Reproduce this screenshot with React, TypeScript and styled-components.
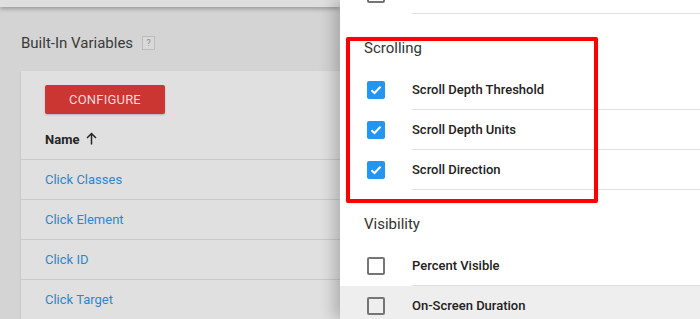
import React from 'react';
import styled, { createGlobalStyle } from 'styled-components';

const GlobalStyle = createGlobalStyle`
  html, body {
    margin: 0;
    padding: 0;
    background: #d4d4d4;
  }
  body {
    font-family: Roboto, "Liberation Sans", Arial, sans-serif;
  }
`;

const Screen = styled.div`
  display: flex;
  width: 700px;
  height: 319px;
  overflow: hidden;
`;

const Page = styled.div`
  width: 340px;
  flex-shrink: 0;
  background: #d4d4d4;
  display: flex;
  flex-direction: column;
`;

const TopBar = styled.div`
  height: 7px;
  background: #dfdfdf;
  box-shadow: 0 2px 4px rgba(0, 0, 0, 0.28);
`;

const Title = styled.div`
  display: flex;
  align-items: center;
  gap: 9px;
  margin: 21px 0 13px 21px;
  height: 30px;
  font-size: 15px;
  color: #3a3a3a;
`;

const Help = styled.span`
  width: 11px;
  height: 12px;
  border: 1px solid #bcbcbc;
  background: #d9d9d9;
  color: #8a8a8a;
  font-size: 9px;
  line-height: 12px;
  text-align: center;
`;

const Card = styled.div`
  margin-left: 21px;
  background: #e0e0e0;
  box-shadow: 0 1px 2px rgba(0, 0, 0, 0.15);
  padding-top: 14px;
  flex: 1;
`;

const ConfigureButton = styled.button`
  margin-left: 24px;
  width: 120px;
  height: 29px;
  border: none;
  border-radius: 2px;
  background: #cb3633;
  color: #f4dada;
  font-family: inherit;
  font-size: 13px;
  letter-spacing: 0.2px;
  box-shadow: 0 1px 2px rgba(0, 0, 0, 0.2);
  margin-bottom: 5px;
`;

const TableRow = styled.div<{ $header?: boolean }>`
  box-sizing: border-box;
  height: 40px;
  display: flex;
  align-items: center;
  padding-left: 24px;
  border-top: ${p => (p.$header ? 'none' : '1px solid #c9c9c9')};
  font-size: 13px;
  font-weight: ${p => (p.$header ? 700 : 400)};
  color: ${p => (p.$header ? '#262626' : '#2f86cf')};
`;

const SortArrow = styled.svg`
  margin-left: 7px;
  margin-top: -1px;
`;

const Panel = styled.div`
  position: relative;
  z-index: 1;
  flex: 1;
  background: #ffffff;
  box-shadow: -6px 0 14px rgba(0, 0, 0, 0.22);
`;

const PanelBody = styled.div`
  margin-top: -26px;
`;

const Row = styled.div<{ $hover?: boolean }>`
  display: flex;
  height: 40px;
  background: ${p => (p.$hover ? '#eeeeee' : 'transparent')};
`;

const BoxCell = styled.div`
  width: 72px;
  flex-shrink: 0;
  display: flex;
  align-items: center;
  padding-left: 27px;
  box-sizing: border-box;
`;

const Label = styled.div`
  flex: 1;
  display: flex;
  align-items: center;
  border-bottom: 1px solid #e0e0e0;
  font-size: 13px;
  font-weight: 500;
  color: #212121;
`;

const Box = styled.div<{ $checked?: boolean }>`
  box-sizing: border-box;
  width: 18px;
  height: 18px;
  border-radius: 2px;
  display: flex;
  align-items: center;
  justify-content: center;
  background: ${p => (p.$checked ? '#2196f3' : 'transparent')};
  border: ${p => (p.$checked ? 'none' : '2px solid #757575')};
`;

const Heading = styled.div`
  height: 56px;
  box-sizing: border-box;
  padding: 21px 0 0 24px;
  line-height: 26px;
  font-size: 15px;
  color: #333333;
`;

const Highlight = styled.div`
  position: absolute;
  left: 6px;
  top: 37px;
  width: 252px;
  height: 166px;
  box-sizing: border-box;
  border: 4px solid #ff0000;
  border-radius: 2px;
  box-shadow: 0 0 1px rgba(0, 0, 0, 0.3);
  pointer-events: none;
`;

const Check = () => (
  <svg width="12" height="10" viewBox="0 0 12 10">
    <path d="M1.5 5.2 L4.5 8 L10.5 1.8" fill="none" stroke="#fff" strokeWidth="2" />
  </svg>
);

interface Item {
  name: string;
  checked: boolean;
  hover?: boolean;
}

const VarRow: React.FC<{ item: Item }> = ({ item }) => (
  <Row $hover={item.hover}>
    <BoxCell>
      <Box $checked={item.checked}>{item.checked && <Check />}</Box>
    </BoxCell>
    <Label>{item.name}</Label>
  </Row>
);

const scrolling: Item[] = [
  { name: 'Scroll Depth Threshold', checked: true },
  { name: 'Scroll Depth Units', checked: true },
  { name: 'Scroll Direction', checked: true },
];

const visibility: Item[] = [
  { name: 'Percent Visible', checked: false },
  { name: 'On-Screen Duration', checked: false, hover: true },
];

const links = ['Click Classes', 'Click Element', 'Click ID', 'Click Target'];

export default function App() {
  return (
    <>
      <GlobalStyle />
      <Screen>
        <Page>
          <TopBar />
          <Title>
            Built-In Variables <Help>?</Help>
          </Title>
          <Card>
            <ConfigureButton>CONFIGURE</ConfigureButton>
            <TableRow $header>
              Name
              <SortArrow width="11" height="13" viewBox="0 0 11 13">
                <path d="M5.5 12.5 V1.5 M1 6 L5.5 1.5 L10 6" fill="none" stroke="#262626" strokeWidth="1.5" />
              </SortArrow>
            </TableRow>
            {links.map(l => (
              <TableRow key={l}>{l}</TableRow>
            ))}
          </Card>
        </Page>
        <Panel>
          <PanelBody>
            <VarRow item={{ name: '', checked: false }} />
            <Heading>Scrolling</Heading>
            {scrolling.map(i => (
              <VarRow key={i.name} item={i} />
            ))}
            <Heading>Visibility</Heading>
            {visibility.map(i => (
              <VarRow key={i.name} item={i} />
            ))}
          </PanelBody>
          <Highlight />
        </Panel>
      </Screen>
    </>
  );
}
